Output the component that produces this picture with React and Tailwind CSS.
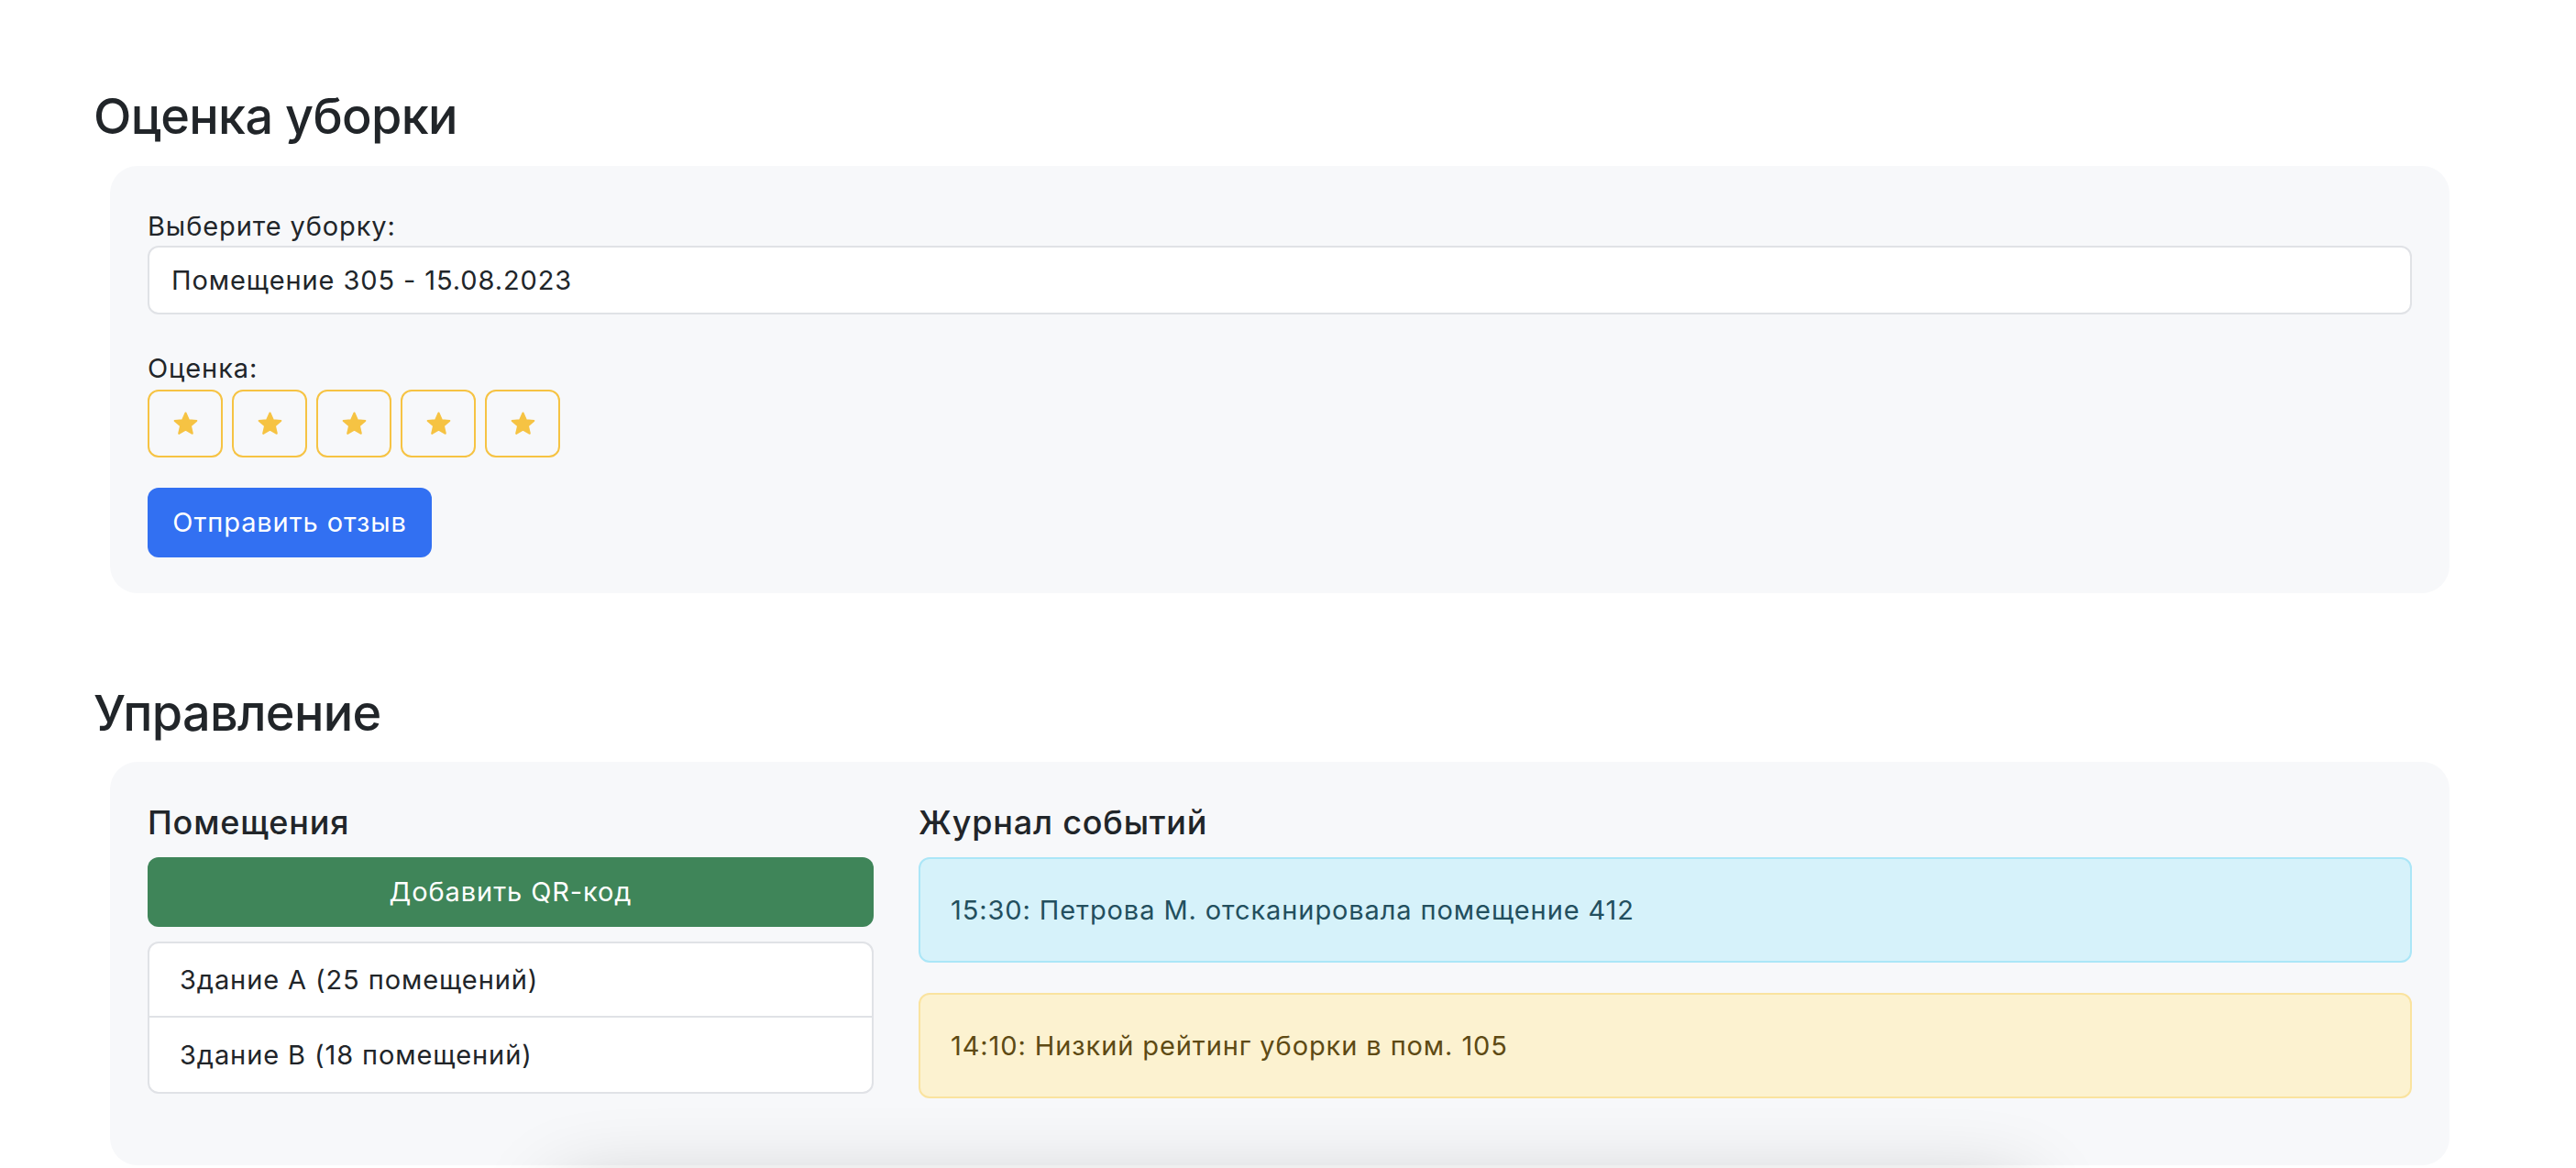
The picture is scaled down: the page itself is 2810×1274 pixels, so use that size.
import React, { useState } from 'react';

const Star = () => (
  <svg width="31" height="29" viewBox="0 0 24 23" className="block">
    <path
      d="M12 2l2.7 6.1 6.7.6-5.1 4.4 1.5 6.6L12 16.3l-5.8 3.4 1.5-6.6-5.1-4.4 6.7-.6z"
      fill="#f6c343"
      stroke="#f6c343"
      strokeWidth="1.6"
      strokeLinejoin="round"
    />
  </svg>
);

const SectionTitle = ({ children }) => (
  <h2 className="text-[54px] leading-[67px] font-medium text-[#212529] tracking-[-0.7px]">{children}</h2>
);

const Panel = ({ children, className = '' }) => (
  <div className={`ml-[18px] bg-[#f7f8fa] rounded-[30px] px-[41px] ${className}`}>{children}</div>
);

export default function App() {
  const [rating, setRating] = useState(0);

  return (
    <div className="relative min-h-screen overflow-hidden bg-white font-['Inter',sans-serif] text-[#212529] text-[29px] tracking-[0.9px]">
      <div className="pl-[102px] pr-[138px] pt-[93px]">

        {/* --- оценка уборки --- */}
        <SectionTitle>Оценка уборки</SectionTitle>
        <Panel className="mt-[21px] pt-[45px] pb-[39px]">
          <label className="block leading-[42px]">Выберите уборку:</label>
          <div className="h-[75px] bg-white border-2 border-[#e0e2e6] rounded-[12px] flex items-center px-[24px]">
            Помещение 305 - 15.08.2023
          </div>

          <label className="block mt-[38px] leading-[42px]">Оценка:</label>
          <div className="flex gap-[10px] mt-[2px]">
            {[1, 2, 3, 4, 5].map((n) => (
              <button
                key={n}
                onClick={() => setRating(n)}
                className="w-[82px] h-[74px] rounded-[12px] border-2 border-[#f6c343] flex items-center justify-center"
              >
                <Star />
              </button>
            ))}
          </div>

          <button className="mt-[33px] h-[76px] w-[310px] rounded-[12px] bg-[#3270f2] text-white">
            Отправить отзыв
          </button>
        </Panel>

        {/* --- управление --- */}
        <div className="mt-[97px]">
          <SectionTitle>Управление</SectionTitle>
        </div>
        <Panel className="mt-[20px] pt-[45px] pb-[40px]">
          <div className="grid grid-cols-[792px_1fr] gap-[49px]">
            <div>
              <h3 className="text-[36px] leading-[42px] font-medium tracking-[0.8px]">Помещения</h3>
              <button className="mt-[17px] w-full h-[76px] rounded-[12px] bg-[#3f8559] text-white">
                Добавить QR-код
              </button>
              <div className="mt-[16px] bg-white border-2 border-[#e0e2e6] rounded-[12px]">
                <div className="h-[81px] flex items-center pl-[33px] border-b-2 border-[#e0e2e6]">Здание А (25 помещений)</div>
                <div className="h-[81px] flex items-center pl-[33px]">Здание B (18 помещений)</div>
              </div>
            </div>

            <div>
              <h3 className="text-[36px] leading-[42px] font-medium tracking-[0.8px]">Журнал событий</h3>
              <div className="mt-[17px] h-[115px] flex items-center px-[33px] rounded-[12px] border-2 border-[#abe6f7] bg-[#d6f2fa] text-[#234f5e]">
                15:30: Петрова М. отсканировала помещение 412
              </div>
              <div className="mt-[33px] mb-[33px] h-[115px] flex items-center px-[33px] rounded-[12px] border-2 border-[#fae39f] bg-[#fcf2d0] text-[#5e4a14]">
                14:10: Низкий рейтинг уборки в пом. 105
              </div>
            </div>
          </div>
        </Panel>
      </div>

      {/* shadow of an element just below the fold */}
      <div className="pointer-events-none absolute top-[1300px] left-[610px] w-[1600px] h-[120px] bg-white shadow-[0_0_90px_rgba(0,0,0,0.24)]" />
    </div>
  );
}
